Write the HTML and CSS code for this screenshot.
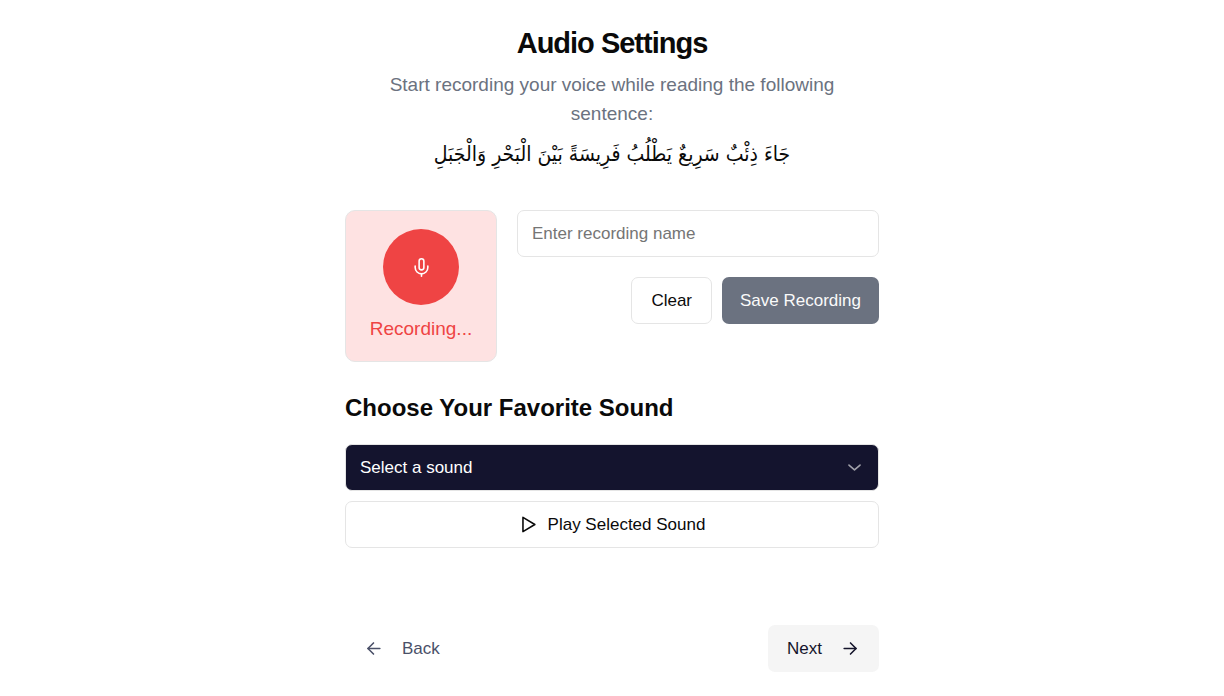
FILE: index.html
```html
<!DOCTYPE html>
<html lang="en">
<head>
    <meta charset="UTF-8">
    <meta name="viewport" content="width=device-width, initial-scale=1.0">
    <title>Audio Settings</title>
    <link rel="stylesheet" href="styles.css">
</head>
<body>

    <main class="settings">
        <header class="intro">
            <h1>Audio Settings</h1>
            <p class="hint">Start recording your voice while reading the following sentence:</p>
            <p class="sentence" lang="ar" dir="rtl">جَاءَ ذِئْبٌ سَرِيعٌ يَطْلُبُ فَرِيسَةً بَيْنَ الْبَحْرِ وَالْجَبَلِ</p>
        </header>

        <section class="recorder">
            <div class="record-box">
                <button type="button" class="mic" aria-label="Stop recording">
                    <svg class="icon" viewBox="0 0 24 24">
                        <path d="M12 1a3 3 0 0 0-3 3v8a3 3 0 0 0 6 0V4a3 3 0 0 0-3-3Z"/>
                        <path d="M20 10v2a8 8 0 0 1-16 0v-2"/>
                        <path d="M12 20v3"/>
                    </svg>
                </button>
                <p class="status">Recording...</p>
            </div>
            <div class="record-form">
                <input type="text" class="name-input" id="recName" aria-label="Recording name" placeholder="Enter recording name">
                <div class="record-actions">
                    <button type="button" class="btn outline">Clear</button>
                    <button type="button" class="btn save">Save Recording</button>
                </div>
            </div>
        </section>

        <section class="sounds">
            <h2><label for="sound">Choose Your Favorite Sound</label></h2>
            <div class="select-wrap">
                <select id="sound" class="sound-select">
                    <option>Select a sound</option>
                </select>
                <svg class="icon chevron" viewBox="0 0 24 24"><path d="m5 9 7 6 7-6"/></svg>
            </div>
            <button type="button" class="btn outline play">
                <svg class="icon" viewBox="0 0 24 24"><path d="M5 3l15 9-15 9V3z"/></svg>
                Play Selected Sound
            </button>
        </section>

        <nav class="steps">
            <button type="button" class="btn back">
                <svg class="icon" viewBox="0 0 24 24"><path d="m12 19-7-7 7-7"/><path d="M20 12H5"/></svg>
                Back
            </button>
            <button type="button" class="btn next">
                Next
                <svg class="icon" viewBox="0 0 24 24"><path d="M4 12h15"/><path d="m12 5 7 7-7 7"/></svg>
            </button>
        </nav>
    </main>

</body>
</html>
```
FILE: styles.css
```css
* {
    margin: 0;
    padding: 0;
    box-sizing: border-box;
}

body {
    background-color: #fff;
    color: #0a0a0a;
    font-family: "Liberation Sans", Arial, sans-serif;
    font-size: 17px;
    line-height: 24px;
}

button, input, select {
    font: inherit;
    color: inherit;
}

button, select {
    cursor: pointer;
}

.settings {
    max-width: 534px;
    margin: 0 auto;
    padding: 24px 0;
}

/* Heading and the sentence to read */
.intro {
    padding: 0 38px;
    text-align: center;
}

h1 {
    font-size: 29px;
    line-height: 38px;
    letter-spacing: -1px;
}

.hint {
    margin-top: 8px;
    color: #6b7280;
    font-size: 19px;
    line-height: 29px;
}

.sentence {
    margin-top: 8px;
    font-family: "DejaVu Sans Condensed", "DejaVu Sans", sans-serif;
    font-size: 21px;
    line-height: 36px;
}

/* Recorder */
.recorder {
    display: flex;
    align-items: flex-start;
    gap: 20px;
    margin-top: 38px;
}

.record-box {
    display: flex;
    flex-direction: column;
    align-items: center;
    gap: 10px;
    flex: none;
    width: 152px;
    height: 152px;
    padding-top: 18px;
    background-color: #fee2e2;
    border: 1px solid #e5e5e5;
    border-radius: 10px;
}

.mic {
    display: flex;
    align-items: center;
    justify-content: center;
    width: 76px;
    height: 76px;
    background-color: #ef4444;
    border: none;
    border-radius: 50%;
    color: #fff;
}

.status {
    color: #ef4444;
    font-size: 19px;
    line-height: 28px;
}

.record-form {
    flex: 1;
    min-width: 0;
}

.name-input {
    display: block;
    width: 100%;
    height: 47px;
    padding: 0 14px;
    border: 1px solid #e5e5e5;
    border-radius: 7px;
}

.name-input::placeholder {
    color: #757575;
}

.record-actions {
    display: flex;
    justify-content: flex-end;
    gap: 10px;
    margin-top: 20px;
}

.btn {
    display: flex;
    align-items: center;
    justify-content: center;
    height: 47px;
    padding: 0 19px;
    background-color: #fff;
    border: none;
    border-radius: 7px;
}

.outline {
    border: 1px solid #e5e5e5;
}

.save {
    padding: 0 18px;
    background-color: #6b7280;
    color: #fafafa;
}

/* Sound picker */
.sounds {
    margin-top: 29px;
}

h2 {
    font-size: 24px;
    line-height: 34px;
}

.select-wrap {
    display: grid;
    align-items: center;
    margin-top: 19px;
}

.sound-select {
    grid-area: 1 / 1;
    width: 100%;
    height: 47px;
    padding: 0 14px;
    appearance: none;
    background-color: #14142e;
    border: 1px solid #e5e5e5;
    border-radius: 7px;
    color: #fff;
}

.icon {
    width: 19px;
    height: 19px;
    fill: none;
    stroke: currentColor;
    stroke-width: 2;
    stroke-linecap: round;
    stroke-linejoin: round;
}

.chevron {
    grid-area: 1 / 1;
    justify-self: end;
    margin-right: 15px;
    color: #a1a1aa;
    pointer-events: none;
}

.play {
    gap: 10px;
    width: 100%;
    margin-top: 10px;
}

/* Back and next */
.steps {
    display: flex;
    justify-content: space-between;
    margin-top: 77px;
}

.back {
    gap: 19px;
    color: #4a5068;
}

.next {
    gap: 19px;
    background-color: #f5f5f5;
    color: #14142b;
}
```
